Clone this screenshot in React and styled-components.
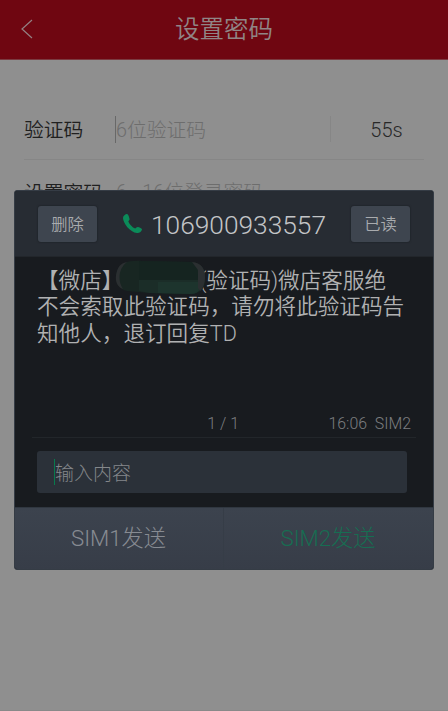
import React from 'react';
import styled, { createGlobalStyle } from 'styled-components';

const GlobalStyle = createGlobalStyle`
* { box-sizing: border-box; }
body {
  margin: 0;
  background: #8f8f8f;
  font-family: Roboto, "Noto Sans CJK SC", sans-serif;
  font-weight: 350;
  overflow: hidden;
}
button { font-family: inherit; font-weight: inherit; padding: 0; border: 0; }
`;

const Page = styled.div`
position: relative;
height: 711px;
background: #8f8f8f;
border-bottom: 1px solid #898989;
`;

const TopBar = styled.header`
display: grid;
grid-template-columns: 60px 1fr 60px;
align-items: center;
height: 60px;
background: #6f0611;
border-bottom: 1px solid #7b3a40;
`;

const BackIcon = styled.svg`
width: 12px;
height: 20px;
margin-left: 21px;
margin-bottom: 1px;
fill: none;
stroke: #948083;
stroke-width: 1.2;
`;

const Title = styled.h1`
margin: 0;
padding-top: 1px;
text-align: center;
font-size: 24.5px;
font-weight: 350;
line-height: 36px;
color: #908586;
`;

const Form = styled.main`
padding: 39px 24px 0;
`;

const Field = styled.div`
display: flex;
align-items: center;
height: 61px;
border-bottom: 1px solid #868686;
`;

const Label = styled.label`
width: 91px;
padding-bottom: ${(p) => (p.$low ? '0' : '2px')};
padding-top: ${(p) => (p.$low ? '2px' : '0')};
font-size: 19.8px;
white-space: nowrap;
color: #202020;
`;

const Placeholder = styled.span`
flex: 1;
height: 27px;
border-left: 1px solid ${(p) => (p.$active ? '#686868' : 'transparent')};
font-size: 19.8px;
font-weight: 300;
line-height: ${(p) => (p.$active ? '29px' : '32px')};
white-space: pre;
color: #6d6d6d;
`;

const Countdown = styled.span`
width: 94px;
height: 26px;
padding-left: 18px;
border-left: 1px solid #868686;
font-size: 20px;
line-height: 28px;
text-align: center;
color: #282828;
`;

const Dialog = styled.section`
position: absolute;
top: 190px;
left: 14px;
width: 420px;
height: 380px;
display: flex;
flex-direction: column;
overflow: hidden;
border: 1px solid #353c45;
border-radius: 3px;
background: #181b1f;
`;

const DialogHeader = styled.div`
display: flex;
align-items: center;
justify-content: space-between;
height: 66px;
padding: 0 23px;
background: #272c33;
border-bottom: 1px solid #22262b;
`;

const SmallButton = styled.button`
width: 59px;
height: 36px;
padding-top: 1px;
border-radius: 3px;
background: #3e454f;
box-shadow: 0 0 1px 1px #22272d;
font-size: 16.3px;
line-height: 36px;
color: #a9abae;
`;

const Caller = styled.div`
display: flex;
align-items: center;
font-size: 26.3px;
font-weight: 300;
color: #c3c5c7;
`;

const Number = styled.span`
padding-top: 3px;
`;

const PhoneIcon = styled.svg`
width: 21px;
height: 21px;
margin-right: 8px;
fill: #0b8b59;
`;

const DialogBody = styled.div`
flex: 1;
display: flex;
flex-direction: column;
padding: 11px 22px 0;
`;

const Message = styled.div`
flex: 1;
font-size: 21.6px;
line-height: 26.4px;
color: #b0b1b2;
`;

const Line = styled.div`
display: flex;
white-space: pre;
`;

// the code itself stays hidden under a brush stroke
const Redacted = styled.svg`
width: 90px;
height: 35px;
margin: -8px -6px -1px -8px;
z-index: 1;
`;

const Meta = styled.div`
display: flex;
height: 29px;
margin: 0 -5px 13px;
padding-right: 5px;
border-bottom: 1px solid #22262a;
font-size: 15.9px;
line-height: 29px;
color: #7c7e80;
`;

const Pager = styled.span`
margin-left: auto;
`;

const Stamp = styled.span`
width: 172px;
text-align: right;
white-space: pre;
`;

const Reply = styled.div`
display: flex;
align-items: center;
width: 370px;
height: 42px;
margin-bottom: 14px;
padding-left: 17px;
border-radius: 3px;
background: #2b3139;
`;

const ReplyText = styled.span`
height: 26px;
border-left: 1px solid #087a4d;
font-size: 19px;
font-weight: 300;
line-height: 30px;
color: #84878b;
`;

const Footer = styled.div`
display: grid;
grid-template-columns: 208px 1fr;
height: 62px;
border-top: 1px solid #303740;
`;

const SendButton = styled.button`
padding: 0 1px 5px 0;
background: linear-gradient(#3c434e, #373d48);
border-left: ${(p) => (p.$active ? '1px solid #363d47' : '0')};
font-size: 22.2px;
font-weight: 300;
color: ${(p) => (p.$active ? '#176d52' : '#878b92')};
`;

const App = () => {
  return (
    <Page>
      <GlobalStyle />
      <TopBar>
        <BackIcon viewBox="0 0 12 20">
          <path d="M11 1 L1 10 L11 19" />
        </BackIcon>
        <Title>设置密码</Title>
      </TopBar>

      <Form>
        <Field>
          <Label>验证码</Label>
          <Placeholder $active>6位验证码</Placeholder>
          <Countdown>55s</Countdown>
        </Field>
        <Field>
          <Label $low>设置密码</Label>
          <Placeholder>6 - 16位登录密码</Placeholder>
        </Field>
      </Form>

      <Dialog>
        <DialogHeader>
          <SmallButton>删除</SmallButton>
          <Caller>
            <PhoneIcon viewBox="0 0 21 21">
              <path d="M4.5 1 C3 1.4 1 3 1 5 C1 10 8 19.4 15 20 C17.5 20.2 19.7 18.6 20 16.6 C20.1 15.8 19.4 15.3 16.2 14 C15 13.5 14.2 14.8 13.2 15.4 C10.5 14.6 7.2 11 6.3 8.2 C7 7.4 7.8 6.8 7.5 5.7 C6.6 1.8 5.7 .7 4.5 1Z" />
            </PhoneIcon>
            <Number>106900933557</Number>
          </Caller>
          <SmallButton>已读</SmallButton>
        </DialogHeader>

        <DialogBody>
          <Message>
            <Line>
              【微店】
              <Redacted viewBox="0 0 90 35">
                <path d="M2 11 C5 3 14 0 27 1 L77 2 C86 3 90 8 90 17 C91 28 86 34 75 34 L34 33 L12 31 C3 29 -1 20 2 11Z" fill="#182622" />
                <path d="M24 1 L77 2 C82 4 83 9 83 20 H24Z" fill="#152420" />
                <path d="M24 20 H88 C87 30 83 34 75 34 L34 33 L24 31Z" fill="#1b2d28" />
                <path d="M43 22 H87 C86 30 83 34 75 34 L43 33Z" fill="#1d342d" />
                <path d="M77 2 C86 3 90 8 90 17 C90 23 88 29 85 31 L83 28 V10Z" fill="#2b2f31" />
                <path d="M2 11 C4 5 7 3 12 2 C4 8 2 20 8 29 C2 27 -1 20 2 11Z" fill="#2b2f31" />
              </Redacted>
              (验证码)微店客服绝
            </Line>
            <Line>不会索取此验证码，请勿将此验证码告</Line>
            <Line>知他人，退订回复TD</Line>
          </Message>
          <Meta>
            <Pager>1 / 1</Pager>
            <Stamp>16:06  SIM2</Stamp>
          </Meta>
          <Reply>
            <ReplyText>输入内容</ReplyText>
          </Reply>
        </DialogBody>

        <Footer>
          <SendButton>SIM1发送</SendButton>
          <SendButton $active>SIM2发送</SendButton>
        </Footer>
      </Dialog>
    </Page>
  );
};

export default App;
